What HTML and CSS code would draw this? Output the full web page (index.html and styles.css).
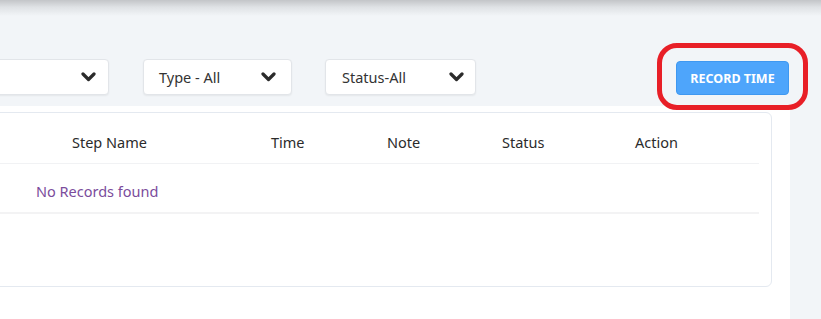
FILE: index.html
```html
<!DOCTYPE html>
<html lang="en">
  <head>
    <meta charset="UTF-8" />
    <meta name="viewport" content="width=device-width, initial-scale=1.0" />
    <title>Time Records</title>
    <link rel="stylesheet" href="styles.css">
  </head>
  <body>
    <div class="topbar"></div>
    <div class="main">
      <div class="filters">
        <div class="select select-project">
          <span class="select-label"></span>
          <svg class="chevron" width="15" height="10" viewBox="0 0 15 10"><path d="M2 2 L7.5 7.5 L13 2" fill="none" stroke="#2b2b2b" stroke-width="3.2" stroke-linecap="round" stroke-linejoin="round"/></svg>
        </div>
        <div class="select select-type">
          <span class="select-label">Type - All</span>
          <svg class="chevron" width="15" height="10" viewBox="0 0 15 10"><path d="M2 2 L7.5 7.5 L13 2" fill="none" stroke="#2b2b2b" stroke-width="3.2" stroke-linecap="round" stroke-linejoin="round"/></svg>
        </div>
        <div class="select select-status">
          <span class="select-label">Status-All</span>
          <svg class="chevron" width="15" height="10" viewBox="0 0 15 10"><path d="M2 2 L7.5 7.5 L13 2" fill="none" stroke="#2b2b2b" stroke-width="3.2" stroke-linecap="round" stroke-linejoin="round"/></svg>
        </div>
        <div class="record-wrap">
          <button class="record-btn">Record Time</button>
          <span class="highlight"></span>
        </div>
      </div>
      <div class="panel">
        <div class="card">
          <div class="table-head">
            <span></span>
            <span>Step Name</span>
            <span>Time</span>
            <span>Note</span>
            <span>Status</span>
            <span>Action</span>
          </div>
          <div class="empty-row">No Records found</div>
        </div>
      </div>
    </div>
  </body>
</html>
```

FILE: styles.css
```css
* {
  box-sizing: border-box;
}
body {
  margin: 0;
  background-color: #f2f5f8;
  font-family: "Noto Sans", "Open Sans", Arial, sans-serif;
  color: #2b2b2b;
  overflow: hidden;
}
.topbar {
  height: 16px;
  background: linear-gradient(#c3c5c8, #dfe2e5 45%, #f2f5f8);
}
.main {
  width: 790px;
}
.filters {
  display: flex;
  align-items: flex-end;
  padding: 43px 1px 11px 0;
}
.select {
  height: 36px;
  display: flex;
  align-items: center;
  justify-content: space-between;
  background-color: #fff;
  border: 1px solid #e2e5e9;
  border-radius: 4px;
  box-shadow: 0 1px 2px rgba(0, 0, 0, 0.06);
  font-size: 14.5px;
  color: #333;
}
.select-project {
  width: 140px;
  margin-left: -31px;
  padding-right: 12px;
}
.select-type {
  width: 149px;
  margin-left: 34px;
  padding: 0 15px;
}
.select-status {
  width: 151px;
  margin-left: 33px;
  padding: 0 11px 0 16px;
}
.select-label {
  line-height: 1;
}
.chevron {
  display: block;
}
.record-wrap {
  position: relative;
  margin-left: auto;
}
.record-btn {
  display: block;
  width: 113px;
  height: 34px;
  border: 1px solid #3f98f0;
  border-radius: 4px;
  background-color: #4ea5fb;
  color: #fff;
  font-family: inherit;
  font-size: 12.5px;
  font-weight: 700;
  text-transform: uppercase;
  cursor: pointer;
}
.highlight {
  position: absolute;
  left: -19px;
  top: -18px;
  right: -19px;
  bottom: -15px;
  border: 5px solid #e81f27;
  border-radius: 20px;
  pointer-events: none;
}
.panel {
  background-color: #fff;
  padding-top: 6px;
  height: 220px;
}
.card {
  margin-left: -10px;
  width: 782px;
  height: 175px;
  border: 1px solid #e4e9f0;
  border-radius: 6px;
  background-color: #fff;
}
.table-head {
  display: grid;
  grid-template-columns: 81px 199px 116px 115px 133px 1fr;
  align-items: start;
  height: 51px;
  padding-top: 20px;
  margin-right: 12px;
  border-bottom: 1px solid #f1f2f4;
  font-size: 14.5px;
  line-height: 19px;
  color: #2b2b2b;
}
.empty-row {
  height: 50px;
  padding: 18px 0 0 45px;
  margin-right: 12px;
  border-bottom: 2px solid #f3f3f4;
  font-size: 14.5px;
  line-height: 19px;
  color: #7b4c9c;
}
```
